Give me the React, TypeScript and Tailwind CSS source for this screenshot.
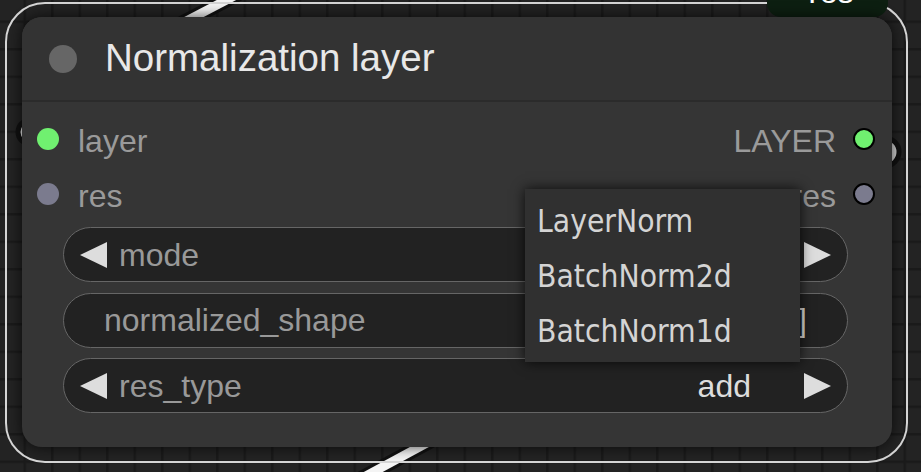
import React from 'react';

const nodeFont = { fontFamily: '"Liberation Sans", Arial, sans-serif' };
const menuFont = { fontFamily: '"DejaVu Sans Condensed", "DejaVu Sans", sans-serif', fontStretch: 'condensed' as const };

const ArrowLeft = () => (
  <svg width="27" height="26" viewBox="0 0 27 26" className="shrink-0">
    <polygon points="27,0 27,26 0,13" fill="#dddddd" />
  </svg>
);

const ArrowRight = () => (
  <svg width="27" height="26" viewBox="0 0 27 26" className="shrink-0">
    <polygon points="0,0 0,26 27,13" fill="#dddddd" />
  </svg>
);

// fondo del canvas: rejilla + enlaces que pasan por detrás del nodo
const Canvas = () => (
  <svg width="921" height="472" className="absolute inset-0">
    <defs>
      <pattern id="grid" width="27.5" height="27.5" patternUnits="userSpaceOnUse" x="23.5" y="20.5">
        <rect width="27.5" height="27.5" fill="#232323" />
        <rect width="2.5" height="27.5" fill="#1a1a1a" />
        <rect width="27.5" height="2.5" fill="#1a1a1a" />
      </pattern>
    </defs>
    <rect width="921" height="472" fill="url(#grid)" />
    <g strokeLinecap="butt">
      <line x1="150" y1="40" x2="280" y2="-28" stroke="#111" strokeWidth="15" />
      <line x1="150" y1="40" x2="280" y2="-28" stroke="#f4f4f4" strokeWidth="9" />
      <line x1="340" y1="490" x2="460" y2="425" stroke="#111" strokeWidth="15" />
      <line x1="340" y1="490" x2="460" y2="425" stroke="#f4f4f4" strokeWidth="9" />
    </g>
    <circle cx="30" cy="132" r="12" fill="#f0f0f0" stroke="#111" strokeWidth="5" />
    <circle cx="885" cy="152" r="14" fill="#d8d8d8" stroke="#111" strokeWidth="5" />
  </svg>
);

const Slot = ({ color, border }: { color: string; border?: boolean }) => (
  <span
    className={`block w-[22px] h-[22px] rounded-full shrink-0 ${border ? 'border-[2.5px] border-black' : ''}`}
    style={{ backgroundColor: color }}
  />
);

// el valor del combo "mode" queda tapado por el menú abierto
const ComboWidget = ({ label, value }: { label: string; value?: string }) => (
  <div className="h-[55px] flex items-center rounded-full border-[1.5px] border-[#666] bg-[#222] pl-[16px] pr-[16px]">
    <ArrowLeft />
    <span className="ml-[12px] text-[32px] leading-none text-[#999]">{label}</span>
    <span className="ml-auto text-[32px] leading-none text-[#ddd]">{value}</span>
    <span className="ml-[53px]">
      <ArrowRight />
    </span>
  </div>
);

export default function App() {
  return (
    <div className="relative w-[921px] h-[472px] overflow-hidden bg-[#232323]" style={nodeFont}>
      <Canvas />

      {/* contorno de selección */}
      <div className="absolute left-[5px] top-[2px] w-[903px] h-[461px] rounded-[40px] border-2 border-[#d6d6d6]" />

      {/* badge verde por encima del nodo */}
      <div className="absolute left-[767px] top-[-40px] w-[121px] h-[57px] rounded-b-[14px] bg-[#0d1f11] flex items-end justify-center pb-[9px]">
        <span className="text-[32px] leading-none text-white">Yes</span>
      </div>

      {/* nodo */}
      <div className="absolute left-[22px] top-[17px] w-[870px] h-[430px] rounded-[20px] bg-[#353535] shadow-[0_0_14px_rgba(0,0,0,0.7)] flex flex-col">
        <div className="h-[85px] flex items-center border-b-2 border-[#2b2b2b] rounded-t-[20px] bg-[#333] pl-[27px]">
          <span className="block w-[28px] h-[28px] rounded-full bg-[#666]" />
          <span className="ml-[28px] text-[38.5px] leading-none text-[#e8e8e8]">Normalization layer</span>
        </div>

        <div className="pt-[9px]">
          <div className="h-[55px] flex items-center pl-[15px] pr-[17px]">
            <Slot color="#70f070" />
            <span className="ml-[19px] mt-[5px] text-[32px] leading-none text-[#9a9a9a]">layer</span>
            <span className="ml-auto mt-[5px] text-[32px] leading-none text-[#9a9a9a]">LAYER</span>
            <span className="ml-[17px]">
              <Slot color="#70f070" border />
            </span>
          </div>
          <div className="h-[55px] flex items-center pl-[15px] pr-[17px]">
            <Slot color="#7b7b8e" />
            <span className="ml-[19px] mt-[5px] text-[32px] leading-none text-[#9a9a9a]">res</span>
            <span className="ml-auto mt-[5px] text-[32px] leading-none text-[#9a9a9a]">res</span>
            <span className="ml-[17px]">
              <Slot color="#7b7b8e" border />
            </span>
          </div>
        </div>

        <div className="mt-[6px] pl-[41px] pr-[44px] flex flex-col gap-[10.5px]">
          <ComboWidget label="mode" />
          <div className="h-[55px] flex items-center rounded-full border-[1.5px] border-[#666] bg-[#222] pl-[40px] pr-[40px]">
            <span className="text-[32px] leading-none text-[#999]">normalized_shape</span>
            <span className="ml-auto text-[32px] leading-none text-[#ddd]">]</span>
          </div>
          <ComboWidget label="res_type" value="add" />
        </div>
      </div>

      {/* menú contextual del combo */}
      <div
        className="absolute left-[525px] top-[189px] w-[275px] bg-[#303030] shadow-[0_0_12px_rgba(0,0,0,0.8)] pt-[5px] pb-[3px]"
        style={menuFont}
      >
        {['LayerNorm', 'BatchNorm2d', 'BatchNorm1d'].map((o) => (
          <div key={o} className="h-[55px] flex items-center pl-[12px] text-[31.5px] leading-none text-[#d4d4d4]">
            {o}
          </div>
        ))}
      </div>
    </div>
  );
}
